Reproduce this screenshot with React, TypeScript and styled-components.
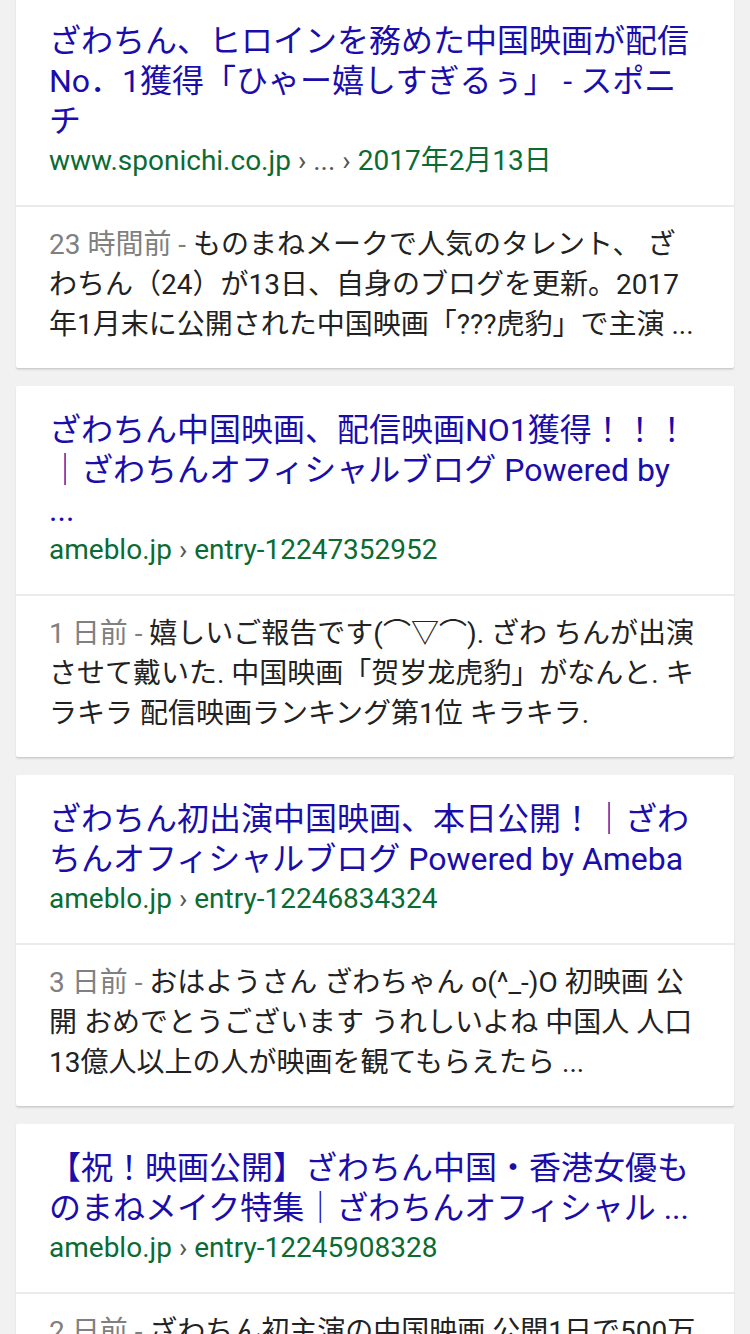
import React from "react";
import styled, { createGlobalStyle } from "styled-components";

type Result = {
  id: number;
  title: string[];
  site: string;
  crumbs?: string;
  tail: string;
  age: string;
  snippet: string[];
};

const results: Result[] = [
  {
    id: 1,
    title: [
      "ざわちん、ヒロインを務めた中国映画が配信",
      "No．1獲得「ひゃー嬉しすぎるぅ」 - スポニ",
      "チ",
    ],
    site: "www.sponichi.co.jp",
    crumbs: " › ... › ",
    tail: "2017年2月13日",
    age: "23 時間前",
    snippet: [
      "ものまねメークで人気のタレント、 ざ",
      "わちん（24）が13日、自身のブログを更新。2017",
      "年1月末に公開された中国映画「???虎豹」で主演 ...",
    ],
  },
  {
    id: 2,
    title: [
      "ざわちん中国映画、配信映画NO1獲得！！！",
      "｜ざわちんオフィシャルブログ Powered by",
      "...",
    ],
    site: "ameblo.jp",
    tail: "entry-12247352952",
    age: "1 日前",
    snippet: [
      "嬉しいご報告です(⌒▽⌒). ざわ ちんが出演",
      "させて戴いた. 中国映画「贺岁龙虎豹」がなんと. キ",
      "ラキラ 配信映画ランキング第1位 キラキラ.",
    ],
  },
  {
    id: 3,
    title: [
      "ざわちん初出演中国映画、本日公開！｜ざわ",
      "ちんオフィシャルブログ Powered by Ameba",
    ],
    site: "ameblo.jp",
    tail: "entry-12246834324",
    age: "3 日前",
    snippet: [
      "おはようさん ざわちゃん o(^_-)O 初映画 公",
      "開 おめでとうございます うれしいよね 中国人 人口",
      "13億人以上の人が映画を観てもらえたら ...",
    ],
  },
  {
    id: 4,
    title: [
      "【祝！映画公開】ざわちん中国・香港女優も",
      "のまねメイク特集｜ざわちんオフィシャル ...",
    ],
    site: "ameblo.jp",
    tail: "entry-12245908328",
    age: "2 日前",
    snippet: ["ざわちん初主演の中国映画 公開1日で500万", "..."],
  },
];

export default function App() {
  return (
    <>
      <GlobalStyle />
      <SPage>
        {results.map((r) => (
          <SCard key={r.id}>
            <SHead>
              <STitle href="#">
                {r.title.map((line, i) => (
                  <SLine key={i}>{line}</SLine>
                ))}
              </STitle>
              <SUrl>
                {r.site}
                <SCrumb>{r.crumbs ?? " › "}</SCrumb>
                {r.tail}
              </SUrl>
            </SHead>
            <SBody>
              {r.snippet.map((line, i) => (
                <SLine key={i}>
                  {i === 0 && <SAge>{r.age} - </SAge>}
                  {line}
                </SLine>
              ))}
            </SBody>
          </SCard>
        ))}
      </SPage>
    </>
  );
}

const GlobalStyle = createGlobalStyle`
  html, body {
    margin: 0;
    padding: 0;
    background: #f1f1f1;
    overflow: hidden;
  }
  body {
    font-family: Roboto, "Noto Sans CJK JP", sans-serif;
  }
`;

const SPage = styled.div`
  display: flex;
  flex-direction: column;
  gap: 18px;
  padding: 0 16px;
  margin-top: -3px;
  height: 1337px;
  overflow: hidden;
`;

const SCard = styled.div`
  flex-shrink: 0;
  background: #fff;
  border-radius: 2px;
  box-shadow: 0 1px 1px rgba(0, 0, 0, 0.06), 0 2px 2px rgba(0, 0, 0, 0.1);
`;

const SHead = styled.div`
  padding: 24px 33px 24px;
  border-bottom: 2px solid #ebebeb;
`;

const SLine = styled.div`
  white-space: nowrap;
`;

const STitle = styled.a`
  display: block;
  font-size: 32px;
  line-height: 40px;
  color: #1a0dab;
  text-decoration: none;
`;

const SUrl = styled.div`
  font-size: 28px;
  line-height: 40px;
  color: #0b6b33;
  white-space: nowrap;
`;

const SCrumb = styled.span`
  color: #555;
`;

const SBody = styled.div`
  padding: 18px 33px 23px;
  font-size: 28px;
  line-height: 40px;
  color: #222;
`;

const SAge = styled.span`
  color: #808080;
`;
